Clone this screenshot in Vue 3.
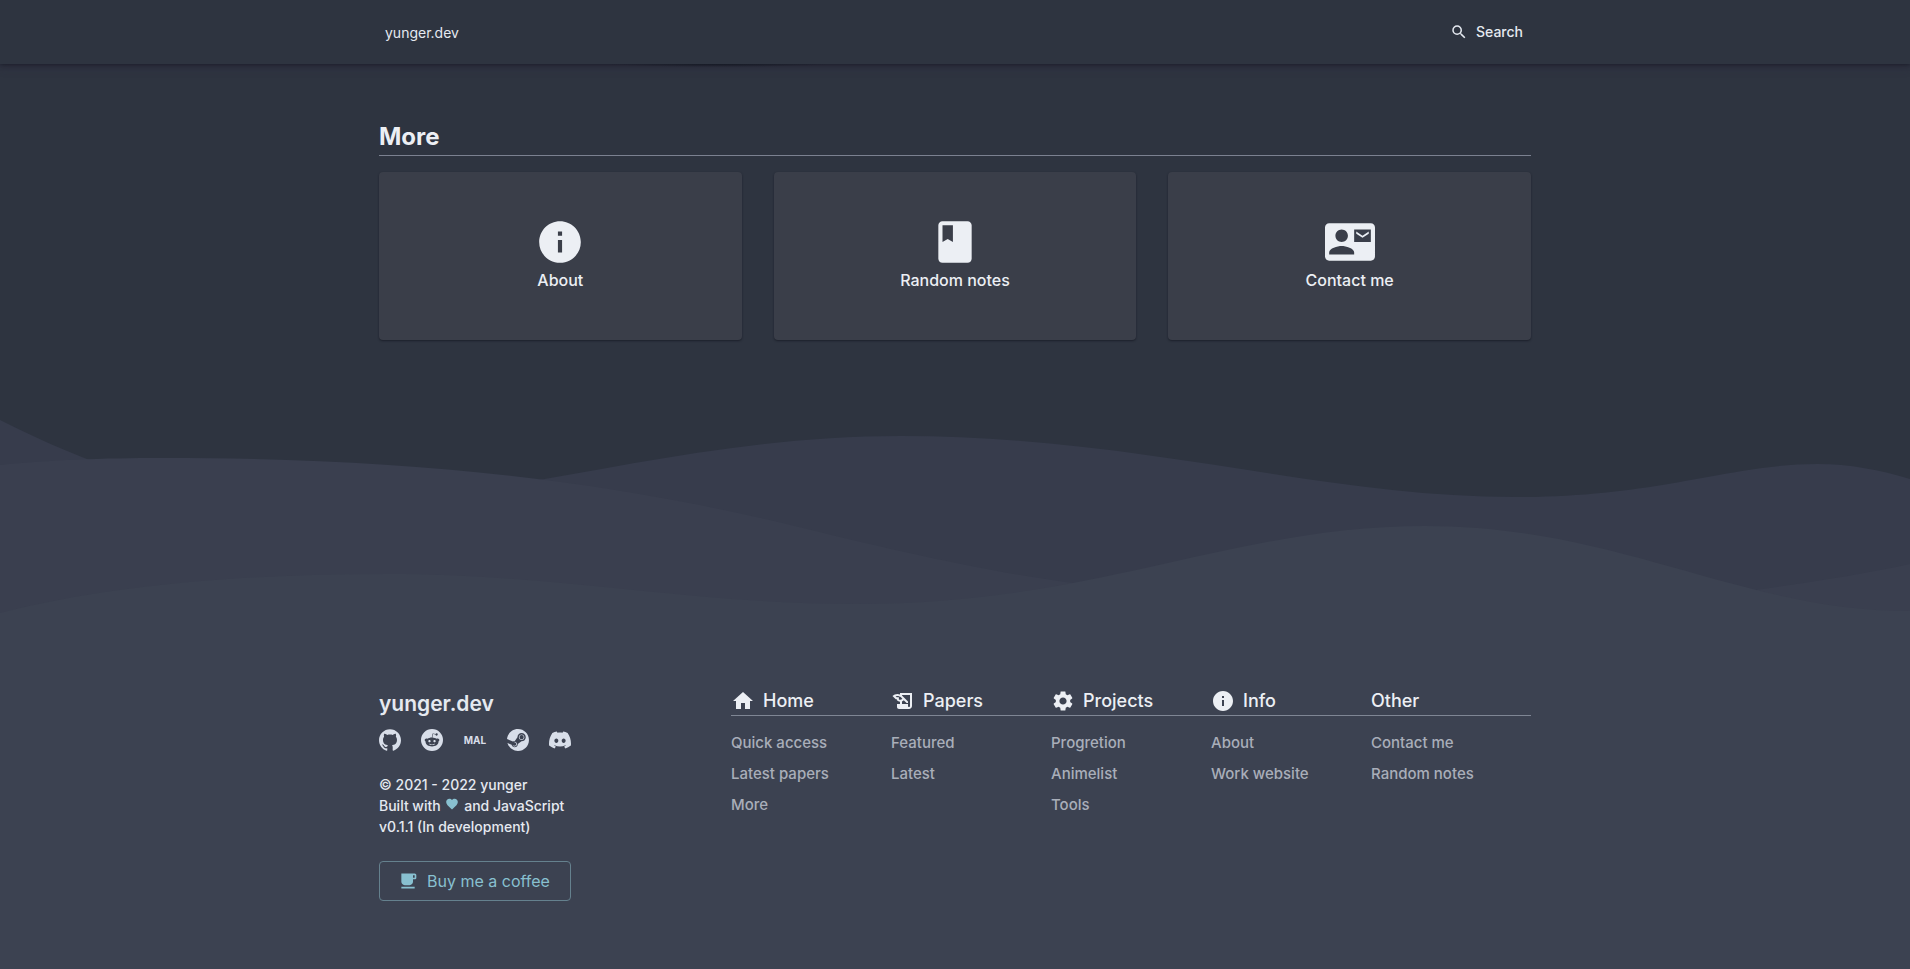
<script setup>
const icons = {
  search: 'M15.5 14h-.79l-.28-.27A6.471 6.471 0 0 0 16 9.5 6.5 6.5 0 1 0 9.5 16c1.61 0 3.09-.59 4.23-1.57l.27.28v.79l5 4.99L20.49 19l-4.99-5zm-6 0C7.01 14 5 11.99 5 9.5S7.01 5 9.5 5 14 7.01 14 9.5 11.99 14 9.5 14z',
  info: 'M12 2C6.48 2 2 6.48 2 12s4.48 10 10 10 10-4.48 10-10S17.52 2 12 2zm1 15h-2v-6h2v6zm0-8h-2V7h2v2z',
  book: 'M18 2H6c-1.1 0-2 .9-2 2v16c0 1.1.9 2 2 2h12c1.1 0 2-.9 2-2V4c0-1.1-.9-2-2-2zM6 4h5v8l-2.5-1.5L6 12V4z',
  contact: 'M21 8V7l-3 2-3-2v1l3 2 3-2zm1-5H2C.9 3 0 3.9 0 5v14c0 1.1.9 2 2 2h20c1.1 0 1.99-.9 1.99-2L24 5c0-1.1-.9-2-2-2zM8 6c1.66 0 3 1.34 3 3s-1.34 3-3 3-3-1.34-3-3 1.34-3 3-3zm6 12H2v-1c0-2 4-3.1 6-3.1s6 1.1 6 3.1v1zm8-6h-8V6h8v6z',
  home: 'M10 20v-6h4v6h5v-8h3L12 3 2 12h3v8z',
  papers: 'M9 4v1.38c-.83-.33-1.72-.5-2.61-.5-1.79 0-3.58.68-4.95 2.05l3.33 3.33h1.11v1.11c.86.86 1.98 1.31 3.11 1.36V15H6v3c0 1.1.9 2 2 2h10c1.66 0 3-1.34 3-3V4H9zm-1.11 6.41V8.26H5.61L4.57 7.22a5.07 5.07 0 0 1 1.82-.34c1.34 0 2.59.52 3.54 1.46l1.41 1.41-.2.2a2.7 2.7 0 0 1-1.92.8c-.47 0-.93-.12-1.33-.34zM19 17c0 .55-.45 1-1 1s-1-.45-1-1v-2h-6v-2.59c.57-.23 1.1-.57 1.56-1.03l.2-.2L15.59 14H17v-1.41l-6-5.97V6h8v11z',
  settings: 'M19.14 12.94c.04-.3.06-.61.06-.94 0-.32-.02-.64-.07-.94l2.03-1.58c.18-.14.23-.41.12-.61l-1.92-3.32c-.12-.22-.37-.29-.59-.22l-2.39.96c-.5-.38-1.03-.7-1.62-.94l-.36-2.54c-.04-.24-.24-.41-.48-.41h-3.84c-.24 0-.43.17-.47.41l-.36 2.54c-.59.24-1.13.57-1.62.94l-2.39-.96c-.22-.08-.47 0-.59.22L2.74 8.87c-.12.21-.08.47.12.61l2.03 1.58c-.05.3-.09.63-.09.94s.02.64.07.94l-2.03 1.58c-.18.14-.23.41-.12.61l1.92 3.32c.12.22.37.29.59.22l2.39-.96c.5.38 1.03.7 1.62.94l.36 2.54c.05.24.24.41.48.41h3.84c.24 0 .44-.17.47-.41l.36-2.54c.59-.24 1.13-.56 1.62-.94l2.39.96c.22.08.47 0 .59-.22l1.92-3.32c.12-.22.07-.47-.12-.61l-2.01-1.58zM12 15.6c-1.98 0-3.6-1.62-3.6-3.6s1.62-3.6 3.6-3.6 3.6 1.62 3.6 3.6-1.62 3.6-3.6 3.6z',
  heart: 'M12 21.35l-1.45-1.32C5.4 15.36 2 12.28 2 8.5 2 5.42 4.42 3 7.5 3c1.74 0 3.41.81 4.5 2.09C13.09 3.81 14.76 3 16.5 3 19.58 3 22 5.42 22 8.5c0 3.78-3.4 6.86-8.55 11.54L12 21.35z',
  coffee: 'M20 3H4v10c0 2.21 1.79 4 4 4h6c2.21 0 4-1.79 4-4v-3h2c1.11 0 2-.9 2-2V5c0-1.11-.89-2-2-2zm0 5h-2V5h2v3zM4 19h16v2H4z',
}

const cards = [
  { label: 'About', icon: icons.info },
  { label: 'Random notes', icon: icons.book },
  { label: 'Contact me', icon: icons.contact },
]

const socials = [
  { name: 'GitHub', path: 'M12 .297c-6.63 0-12 5.373-12 12 0 5.303 3.438 9.8 8.205 11.385.6.113.82-.258.82-.577 0-.285-.01-1.04-.015-2.04-3.338.724-4.042-1.61-4.042-1.61C4.422 18.07 3.633 17.7 3.633 17.7c-1.087-.744.084-.729.084-.729 1.205.084 1.838 1.236 1.838 1.236 1.07 1.835 2.809 1.305 3.495.998.108-.776.417-1.305.76-1.605-2.665-.3-5.466-1.332-5.466-5.93 0-1.31.465-2.38 1.235-3.22-.135-.303-.54-1.523.105-3.176 0 0 1.005-.322 3.3 1.23.96-.267 1.98-.399 3-.405 1.02.006 2.04.138 3 .405 2.28-1.552 3.285-1.23 3.285-1.23.645 1.653.24 2.873.12 3.176.765.84 1.23 1.91 1.23 3.22 0 4.61-2.805 5.625-5.475 5.92.42.36.81 1.096.81 2.22 0 1.606-.015 2.896-.015 3.286 0 .315.21.69.825.57C20.565 22.092 24 17.592 24 12.297c0-6.627-5.373-12-12-12' },
  { name: 'Reddit', path: 'M12 0A12 12 0 0 0 0 12a12 12 0 0 0 12 12 12 12 0 0 0 12-12A12 12 0 0 0 12 0zm5.01 4.744c.688 0 1.25.561 1.25 1.249a1.25 1.25 0 0 1-2.498.056l-2.597-.547-.8 3.747c1.824.07 3.48.632 4.674 1.488.308-.309.73-.491 1.207-.491.968 0 1.754.786 1.754 1.754 0 .716-.435 1.333-1.01 1.614a3.111 3.111 0 0 1 .042.52c0 2.694-3.13 4.87-7.004 4.87-3.874 0-7.004-2.176-7.004-4.87 0-.183.015-.366.043-.534A1.748 1.748 0 0 1 4.028 12c0-.968.786-1.754 1.754-1.754.463 0 .898.196 1.207.49 1.207-.883 2.878-1.43 4.744-1.487l.885-4.182a.342.342 0 0 1 .14-.197.35.35 0 0 1 .238-.042l2.906.617a1.214 1.214 0 0 1 1.108-.701zM9.25 12C8.561 12 8 12.562 8 13.25c0 .687.561 1.248 1.25 1.248.687 0 1.248-.561 1.248-1.249 0-.688-.561-1.249-1.249-1.249zm5.5 0c-.687 0-1.248.561-1.248 1.25 0 .687.561 1.248 1.249 1.248.688 0 1.249-.561 1.249-1.249 0-.687-.562-1.249-1.25-1.249zm-5.466 3.99a.327.327 0 0 0-.231.094.33.33 0 0 0 0 .463c.842.842 2.484.913 2.961.913.477 0 2.105-.056 2.961-.913a.361.361 0 0 0 .029-.463.33.33 0 0 0-.464 0c-.547.533-1.684.73-2.512.73-.828 0-1.979-.196-2.512-.73a.326.326 0 0 0-.232-.095z' },
  { name: 'MAL' },
  { name: 'Steam', path: 'M11.979 0C5.678 0 .511 4.86.022 11.037l6.432 2.658c.545-.371 1.203-.59 1.912-.59.063 0 .125.004.188.006l2.861-4.142V8.91c0-2.495 2.028-4.524 4.524-4.524 2.494 0 4.524 2.031 4.524 4.527s-2.03 4.525-4.524 4.525h-.105l-4.076 2.911c0 .052.004.105.004.159 0 1.875-1.515 3.396-3.39 3.396-1.635 0-3.016-1.173-3.331-2.727L.436 15.27C1.862 20.307 6.486 24 11.979 24c6.627 0 11.999-5.373 11.999-12S18.605 0 11.979 0zM7.54 18.21l-1.473-.61c.262.543.714.999 1.314 1.25 1.297.539 2.793-.076 3.332-1.375.263-.63.264-1.319.005-1.949s-.75-1.121-1.377-1.383c-.624-.26-1.29-.249-1.878-.03l1.523.63c.956.4 1.409 1.5 1.009 2.455-.397.957-1.497 1.41-2.454 1.012H7.54zm11.415-9.303c0-1.662-1.353-3.015-3.015-3.015-1.665 0-3.015 1.353-3.015 3.015 0 1.665 1.35 3.015 3.015 3.015 1.663 0 3.015-1.35 3.015-3.015zm-5.273-.005c0-1.252 1.013-2.266 2.265-2.266 1.249 0 2.266 1.014 2.266 2.266 0 1.251-1.017 2.265-2.266 2.265-1.253 0-2.265-1.014-2.265-2.265z' },
  { name: 'Discord', path: 'M20.317 4.37a19.79 19.79 0 00-4.885-1.515.074.074 0 00-.079.037c-.211.375-.445.865-.608 1.25-1.845-.277-3.68-.277-5.487 0-.164-.394-.406-.875-.618-1.25a.077.077 0 00-.078-.037 19.736 19.736 0 00-4.885 1.515.07.07 0 00-.032.028C.533 9.046-.319 13.58.099 18.058a.082.082 0 00.031.056c2.053 1.508 4.041 2.423 5.993 3.03a.078.078 0 00.084-.028c.462-.63.873-1.295 1.226-1.994a.076.076 0 00-.042-.106c-.652-.248-1.274-.55-1.872-.892a.077.077 0 01-.008-.128c.126-.094.252-.192.372-.291a.074.074 0 01.078-.011c3.928 1.793 8.18 1.793 12.061 0a.074.074 0 01.079.01c.12.099.246.198.373.292a.077.077 0 01-.007.128 12.299 12.299 0 01-1.873.891.077.077 0 00-.041.107c.36.698.772 1.363 1.225 1.993a.076.076 0 00.084.029c1.961-.607 3.95-1.522 6.002-3.03a.077.077 0 00.032-.055c.5-5.177-.838-9.674-3.549-13.66a.061.061 0 00-.031-.029zM8.02 15.331c-1.183 0-2.157-1.086-2.157-2.419 0-1.333.956-2.419 2.157-2.419 1.211 0 2.176 1.095 2.157 2.419 0 1.333-.956 2.419-2.157 2.419zm7.975 0c-1.183 0-2.157-1.086-2.157-2.419 0-1.333.955-2.419 2.157-2.419 1.211 0 2.176 1.095 2.157 2.419 0 1.333-.946 2.419-2.157 2.419z' },
]

const columns = [
  { title: 'Home', icon: icons.home, links: ['Quick access', 'Latest papers', 'More'] },
  { title: 'Papers', icon: icons.papers, links: ['Featured', 'Latest'] },
  { title: 'Projects', icon: icons.settings, links: ['Progretion', 'Animelist', 'Tools'] },
  { title: 'Info', icon: icons.info, links: ['About', 'Work website'] },
  { title: 'Other', links: ['Contact me', 'Random notes'] },
]
</script>

<template>
  <div class="page">
    <header class="topbar">
      <div class="container topbar-inner">
        <a class="logo" href="#">yunger.dev</a>
        <button class="search" type="button">
          <svg viewBox="0 0 24 24" width="18" height="18" aria-hidden="true"><path :d="icons.search" /></svg>
          <span>Search</span>
        </button>
      </div>
    </header>

    <main class="container main">
      <h2 class="section-title">More</h2>
      <div class="cards">
        <a v-for="card in cards" :key="card.label" class="card" href="#">
          <svg viewBox="0 0 24 24" width="50" height="50" aria-hidden="true"><path :d="card.icon" /></svg>
          <span>{{ card.label }}</span>
        </a>
      </div>
    </main>

    <svg class="waves" viewBox="0 420 1910 200" preserveAspectRatio="none" aria-hidden="true">
      <path class="wave-back" d="M0 420C110 475 200 503 318 503C510 503 680 436 901 436C1140 436 1320 497 1515 497C1660 497 1730 464 1817 464C1850 464 1880 470 1910 479V620H0z" />
      <path class="wave-mid" d="M0 465C50 460 100 458 163 458C400 458 600 478 803 528C880 547 990 573 1081 584C1300 620 1550 625 1756 590C1810 582 1860 575 1910 564V620H0z" />
      <path class="wave-front" d="M0 613C110 585 240 574 388 574C560 574 690 604 856 604C1100 604 1230 526 1425 526C1620 526 1740 611 1910 611V620H0z" />
    </svg>

    <footer class="footer">
      <div class="container footer-inner">
        <section class="about">
          <h3 class="brand">yunger.dev</h3>
          <div class="socials">
            <a v-for="s in socials" :key="s.name" class="social" href="#" :aria-label="s.name">
              <svg v-if="s.path" viewBox="0 0 24 24" width="22" height="22" aria-hidden="true"><path :d="s.path" /></svg>
              <span v-else class="mal">MAL</span>
            </a>
          </div>
          <p class="legal">
            © 2021 - 2022 yunger<br>
            Built with
            <svg class="heart" viewBox="0 0 24 24" width="14" height="14" aria-hidden="true"><path :d="icons.heart" /></svg>
            and JavaScript<br>
            v0.1.1 (In development)
          </p>
          <a class="coffee" href="#">
            <svg viewBox="0 0 24 24" width="20" height="20" aria-hidden="true"><path :d="icons.coffee" /></svg>
            <span>Buy me a coffee</span>
          </a>
        </section>

        <nav class="sitemap">
          <div v-for="col in columns" :key="col.title" class="column">
            <h4 class="column-title">
              <svg v-if="col.icon" viewBox="0 0 24 24" width="24" height="24" aria-hidden="true"><path :d="col.icon" /></svg>
              <span>{{ col.title }}</span>
            </h4>
            <ul class="links">
              <li v-for="link in col.links" :key="link"><a href="#">{{ link }}</a></li>
            </ul>
          </div>
        </nav>
      </div>
    </footer>
  </div>
</template>

<style>
body {
  margin: 0;
  background: #2e3440;
}
</style>

<style scoped>
.page {
  display: flex;
  flex-direction: column;
  min-height: 100vh;
  background: #2e3440;
  color: #eceff4;
  font-family: Inter, Roboto, sans-serif;
}

.page * {
  box-sizing: border-box;
}

svg {
  fill: currentColor;
  flex: none;
}

a {
  color: inherit;
  text-decoration: none;
}

.container {
  width: 100%;
  max-width: 1152px;
  margin: 0 auto;
}

.topbar {
  height: 64px;
  background: #2e3440;
  box-shadow: 0 1px 4px rgba(16, 18, 28, 0.6), 0 4px 8px rgba(46, 40, 62, 0.4);
}

.topbar-inner {
  display: flex;
  align-items: center;
  justify-content: space-between;
  height: 100%;
  padding: 0 8px 0 6px;
}

.logo {
  color: #e5e9f0;
  font-size: 14px;
  line-height: 20px;
  padding-top: 2px;
}

.search {
  display: flex;
  align-items: center;
  gap: 8px;
  padding: 0 0 1px;
  border: 0;
  background: none;
  color: #e5e9f0;
  font: 500 14px/20px Inter, Roboto, sans-serif;
  cursor: pointer;
}

.main {
  position: relative;
  padding: 57px 0 80px;
}

.main::before {
  content: "";
  position: absolute;
  top: 0;
  left: 20%;
  width: 220px;
  height: 3px;
  background: radial-gradient(110px 3px at 50% 0, #171b26, transparent);
}

.section-title {
  margin: 0 0 16px;
  padding-bottom: 2px;
  border-bottom: 1px solid #7b8190;
  font-size: 24px;
  font-weight: 700;
  line-height: 32px;
}

.cards {
  display: grid;
  grid-template-columns: repeat(3, 1fr);
  gap: 32px;
}

.card {
  display: flex;
  flex-direction: column;
  align-items: center;
  justify-content: center;
  gap: 1px;
  height: 168px;
  padding-bottom: 3px;
  border-radius: 4px;
  background: #3a3e49;
  box-shadow: 0 1px 2px rgba(16, 18, 28, 0.6);
  font-size: 16px;
  font-weight: 500;
  line-height: 24px;
}

.waves {
  display: block;
  width: 100%;
  height: 200px;
}

.wave-back { fill: #373c4c; }
.wave-mid { fill: #3a3f4f; }
.wave-front { fill: #3c4251; }

.footer {
  flex: 1;
  padding: 67px 0 40px;
  background: #3c4251;
}

.footer-inner {
  display: flex;
  justify-content: space-between;
}

.about {
  width: 192px;
}

.brand {
  margin: 0 0 8px;
  color: #e5e9f0;
  font-size: 21px;
  font-weight: 600;
  line-height: 34px;
}

.socials {
  display: flex;
  justify-content: space-between;
  color: #d8dee9;
}

.social {
  display: flex;
  align-items: center;
  justify-content: center;
  height: 22px;
}

.mal {
  font-size: 10px;
  font-weight: 700;
  line-height: 22px;
}

.legal {
  margin: 23px 0 24px;
  color: #e5e9f0;
  font-size: 14px;
  font-weight: 500;
  line-height: 21px;
  white-space: nowrap;
}

.heart {
  margin: 0 1px;
  color: #88c0d0;
}

.coffee {
  display: flex;
  align-items: center;
  gap: 9px;
  height: 40px;
  padding: 0 18px;
  border: 1px solid #65818e;
  border-radius: 4px;
  color: #88c0d0;
  font-size: 16px;
  line-height: 24px;
  white-space: nowrap;
}

.sitemap {
  display: grid;
  grid-template-columns: repeat(5, 1fr);
  width: 800px;
}

.column-title {
  display: flex;
  align-items: center;
  gap: 8px;
  height: 29px;
  margin: 0;
  padding-bottom: 1px;
  border-bottom: 1px solid #7f8694;
  font-size: 18px;
  font-weight: 500;
}

.links {
  display: flex;
  flex-direction: column;
  gap: 11px;
  margin: 0;
  padding: 17px 0 0;
  list-style: none;
  color: #a9aeb9;
  font-size: 15px;
  font-weight: 500;
  line-height: 20px;
}
</style>
